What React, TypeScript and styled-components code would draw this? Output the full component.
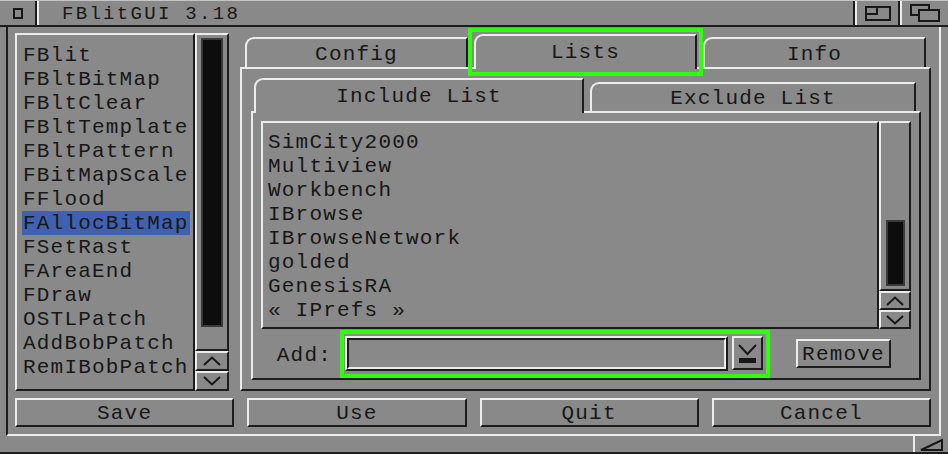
import styled, { createGlobalStyle, css } from "styled-components";

const GRAY = "#898989";
const HI = "#ececec";
const LO = "#1c1c1c";
const INK = "#171717";
const BLUE = "#4061b1";
const GREEN = "#2eff0c";

const GlobalStyle = createGlobalStyle`
  * { box-sizing: border-box; }
  body {
    margin: 0;
    background: ${GRAY};
    overflow: hidden;
    font-family: "Liberation Mono", "DejaVu Sans Mono", monospace;
    font-size: 21px;
    letter-spacing: 1.2px;
    color: ${INK};
  }
`;

const raised = css`
  border-style: solid;
  border-width: 2px;
  border-color: ${HI} ${LO} ${LO} ${HI};
`;

const recessed = css`
  border-style: solid;
  border-width: 2px;
  border-color: ${LO} ${HI} ${HI} ${LO};
`;

const Window = styled.div`
  width: 948px;
  height: 454px;
  display: flex;
  flex-direction: column;
`;

const TitleBar = styled.div`
  height: 27px;
  display: flex;
  border-top: 1px solid #c4c4c4;
  border-bottom: 2px solid ${LO};
`;

const CloseGadget = styled.div`
  width: 37px;
  border-right: 2px solid ${LO};
  display: flex;
  align-items: center;
  justify-content: center;
`;

const Title = styled.div`
  flex: 1;
  border-left: 2px solid ${HI};
  border-right: 2px solid ${LO};
  padding: 1px 0 0 23px;
  font-size: 19px;
  letter-spacing: 2.3px;
  display: flex;
  align-items: center;
`;

const Gadget = styled.div<{ $w: number; $last?: boolean }>`
  width: ${(p) => p.$w}px;
  border-left: 2px solid ${HI};
  border-right: ${(p) => (p.$last ? "none" : `2px solid ${LO}`)};
  display: flex;
  align-items: center;
  justify-content: center;
`;

const Middle = styled.div`
  flex: 1;
  display: flex;
  padding: 0 7px 0 6px;
`;

const Content = styled.div`
  flex: 1;
  border-left: 2px solid ${LO};
  border-right: 2px solid ${HI};
  border-bottom: 2px solid ${HI};
  padding: 6px 8px 0 7px;
  display: flex;
  flex-direction: column;
`;

const TopRow = styled.div`
  height: 358px;
  display: flex;
  gap: 11px;
`;

const LeftCol = styled.div`
  width: 214px;
  display: flex;
`;

const ListBox = styled.div<{ $pad: string }>`
  ${raised};
  flex: 1;
  padding: ${(p) => p.$pad};
  overflow: hidden;
`;

const Row = styled.div<{ $selected?: boolean }>`
  height: 24px;
  line-height: 20px;
  padding: 3px 0 0 1px;
  white-space: nowrap;
  background: ${(p) => (p.$selected ? BLUE : "transparent")};
`;

const Scroller = styled.div<{ $w: number }>`
  width: ${(p) => p.$w}px;
  display: flex;
  flex-direction: column;
`;

const ScrollBody = styled.div`
  ${raised};
  flex: 1;
  display: flex;
  flex-direction: column;
  padding: 2px 0 3px;
`;

const Knob = styled.div<{ $w: number; $h: number; $end?: boolean }>`
  width: ${(p) => p.$w}px;
  height: ${(p) => p.$h}px;
  margin: ${(p) => (p.$end ? "auto" : "1px")} auto 0;
  background: #0d0d0d;
  border: 2px solid #3a3a3a;
`;

const ArrowBox = styled.div<{ $h: number }>`
  ${raised};
  height: ${(p) => p.$h}px;
  display: flex;
  align-items: center;
  justify-content: center;
`;

const RightCol = styled.div`
  flex: 1;
  display: flex;
  flex-direction: column;
`;

const TabRow = styled.div<{ $h: number; $pad: string }>`
  height: ${(p) => p.$h}px;
  display: flex;
  align-items: flex-end;
  gap: 6px;
  padding: ${(p) => p.$pad};
`;

const Tab = styled.div<{ $w: number; $h: number; $active?: boolean; $marked?: boolean }>`
  position: relative;
  width: ${(p) => p.$w}px;
  height: ${(p) => p.$h + (p.$active ? 2 : 0)}px;
  margin-bottom: ${(p) => (p.$active ? -2 : 0)}px;
  z-index: ${(p) => (p.$active ? 1 : 0)};
  background: ${GRAY};
  border-top: 2px solid ${HI};
  border-left: 2px solid ${HI};
  border-right: 2px solid ${LO};
  border-top-left-radius: 9px;
  display: flex;
  align-items: center;
  justify-content: center;
  padding-top: 2px;
  padding-bottom: ${(p) => (p.$active ? 2 : 0)}px;
  ${(p) =>
    p.$marked &&
    css`
      &::after {
        content: "";
        position: absolute;
        inset: -8px -8px -7px -8px;
        border: 4px solid ${GREEN};
        pointer-events: none;
      }
    `}
`;

const Panel = styled.div<{ $pad: string }>`
  ${raised};
  flex: 1;
  padding: ${(p) => p.$pad};
  display: flex;
  flex-direction: column;
`;

const ListRow = styled.div`
  height: 208px;
  display: flex;
`;

const AddRow = styled.div`
  height: 49px;
  display: flex;
  align-items: center;
`;

const AddLabel = styled.div`
  width: 79px;
  text-align: right;
  padding: 3px 8px 0 0;
`;

const Highlight = styled.div`
  height: 48px;
  display: flex;
  align-items: center;
  gap: 4px;
  border: 4px solid ${GREEN};
  padding: 0 3px 1px 1px;
`;

const StringGadget = styled.div`
  ${raised};
  width: 383px;
  height: 35px;
`;

const StringInner = styled.div`
  ${recessed};
  height: 100%;
`;

const Button = styled.div<{ $w?: number; $h: number; $gap?: number }>`
  ${raised};
  width: ${(p) => (p.$w ? `${p.$w}px` : "auto")};
  height: ${(p) => p.$h}px;
  margin-left: ${(p) => p.$gap ?? 0}px;
  padding-top: 2px;
  display: flex;
  align-items: center;
  justify-content: center;
  white-space: nowrap;
`;

const ButtonRow = styled.div`
  margin-top: 7px;
  height: 29px;
  display: grid;
  grid-template-columns: repeat(4, 1fr);
  gap: 13px;
`;

const BottomBar = styled.div`
  height: 18px;
  display: flex;
  justify-content: flex-end;
  border-bottom: 2px solid ${LO};
`;

const SizeGadget = styled.div`
  width: 35px;
  border-left: 2px solid ${HI};
  display: flex;
  align-items: center;
  justify-content: center;
`;

const Chevron = ({ up }: { up?: boolean }) => (
  <svg width="18" height="10" viewBox="0 0 18 10">
    <polyline
      points={up ? "1,9 9,1.5 17,9" : "1,1 9,8.5 17,1"}
      fill="none"
      stroke={INK}
      strokeWidth="2"
    />
  </svg>
);

const leftItems = [
  "FBlit",
  "FBltBitMap",
  "FBltClear",
  "FBltTemplate",
  "FBltPattern",
  "FBitMapScale",
  "FFlood",
  "FAllocBitMap",
  "FSetRast",
  "FAreaEnd",
  "FDraw",
  "OSTLPatch",
  "AddBobPatch",
  "RemIBobPatch",
];

const includeItems = [
  "SimCity2000",
  "Multiview",
  "Workbench",
  "IBrowse",
  "IBrowseNetwork",
  "golded",
  "GenesisRA",
  "« IPrefs »",
];

export default function App() {
  return (
    <Window>
      <GlobalStyle />
      <TitleBar>
        <CloseGadget>
          <svg width="10" height="11" viewBox="0 0 10 11">
            <rect x="1" y="1" width="8" height="9" fill="none" stroke={INK} strokeWidth="2" />
          </svg>
        </CloseGadget>
        <Title>FBlitGUI 3.18</Title>
        <Gadget $w={45}>
          <svg width="26" height="15" viewBox="0 0 26 15">
            <rect x="1" y="1" width="24" height="13" fill="none" stroke={INK} strokeWidth="2" />
            <rect x="1" y="1" width="11" height="7" fill="none" stroke={INK} strokeWidth="2" />
          </svg>
        </Gadget>
        <Gadget $w={48} $last>
          <svg width="30" height="18" viewBox="0 0 30 18">
            <rect x="1" y="1" width="18" height="10" fill="none" stroke={INK} strokeWidth="2" />
            <rect x="9" y="6" width="20" height="11" fill={GRAY} stroke={INK} strokeWidth="2" />
          </svg>
        </Gadget>
      </TitleBar>

      <Middle>
        <Content>
          <TopRow>
            <LeftCol>
              <ListBox $pad="8px 3px 0 5px">
                {leftItems.map((name) => (
                  <Row key={name} $selected={name === "FAllocBitMap"}>
                    {name}
                  </Row>
                ))}
              </ListBox>
              <Scroller $w={34}>
                <ScrollBody>
                  <Knob $w={22} $h={289} />
                </ScrollBody>
                <ArrowBox $h={20}>
                  <Chevron up />
                </ArrowBox>
                <ArrowBox $h={20}>
                  <Chevron />
                </ArrowBox>
              </Scroller>
            </LeftCol>

            <RightCol>
              <TabRow $h={35} $pad="0 5px">
                <Tab $w={223} $h={30}>Config</Tab>
                <Tab $w={223} $h={33} $active $marked>
                  Lists
                </Tab>
                <Tab $w={223} $h={30}>Info</Tab>
              </TabRow>
              <Panel $pad="9px 8px 9px 9px">
                <TabRow $h={33} $pad="0 0 0 3px">
                  <Tab $w={330} $h={33} $active>
                    Include List
                  </Tab>
                  <Tab $w={326} $h={29}>Exclude List</Tab>
                </TabRow>
                <Panel $pad="8px 8px 0 8px">
                  <ListRow>
                    <ListBox $pad="7px 4px 0 4px">
                      {includeItems.map((name) => (
                        <Row key={name}>{name}</Row>
                      ))}
                    </ListBox>
                    <Scroller $w={32}>
                      <ScrollBody>
                        <Knob $w={19} $h={66} $end />
                      </ScrollBody>
                      <ArrowBox $h={19}>
                        <Chevron up />
                      </ArrowBox>
                      <ArrowBox $h={19}>
                        <Chevron />
                      </ArrowBox>
                    </Scroller>
                  </ListRow>
                  <AddRow>
                    <AddLabel>Add:</AddLabel>
                    <Highlight>
                      <StringGadget>
                        <StringInner />
                      </StringGadget>
                      <Button $w={31} $h={34}>
                        <svg width="19" height="19" viewBox="0 0 19 19" style={{ marginTop: -2 }}>
                          <polyline points="1,1 9.5,10 18,1" fill="none" stroke={INK} strokeWidth="2" />
                          <rect x="1" y="14" width="17" height="5" fill={INK} />
                        </svg>
                      </Button>
                    </Highlight>
                    <Button $w={95} $h={29} $gap={26}>
                      Remove
                    </Button>
                  </AddRow>
                </Panel>
              </Panel>
            </RightCol>
          </TopRow>

          <ButtonRow>
            <Button $h={29}>Save</Button>
            <Button $h={29}>Use</Button>
            <Button $h={29}>Quit</Button>
            <Button $h={29}>Cancel</Button>
          </ButtonRow>
        </Content>
      </Middle>

      <BottomBar>
        <SizeGadget>
          <svg width="24" height="13" viewBox="0 0 24 13">
            <path d="M1 12 L22 2 L22 12 Z" fill="none" stroke={INK} strokeWidth="2" />
          </svg>
        </SizeGadget>
      </BottomBar>
    </Window>
  );
}
